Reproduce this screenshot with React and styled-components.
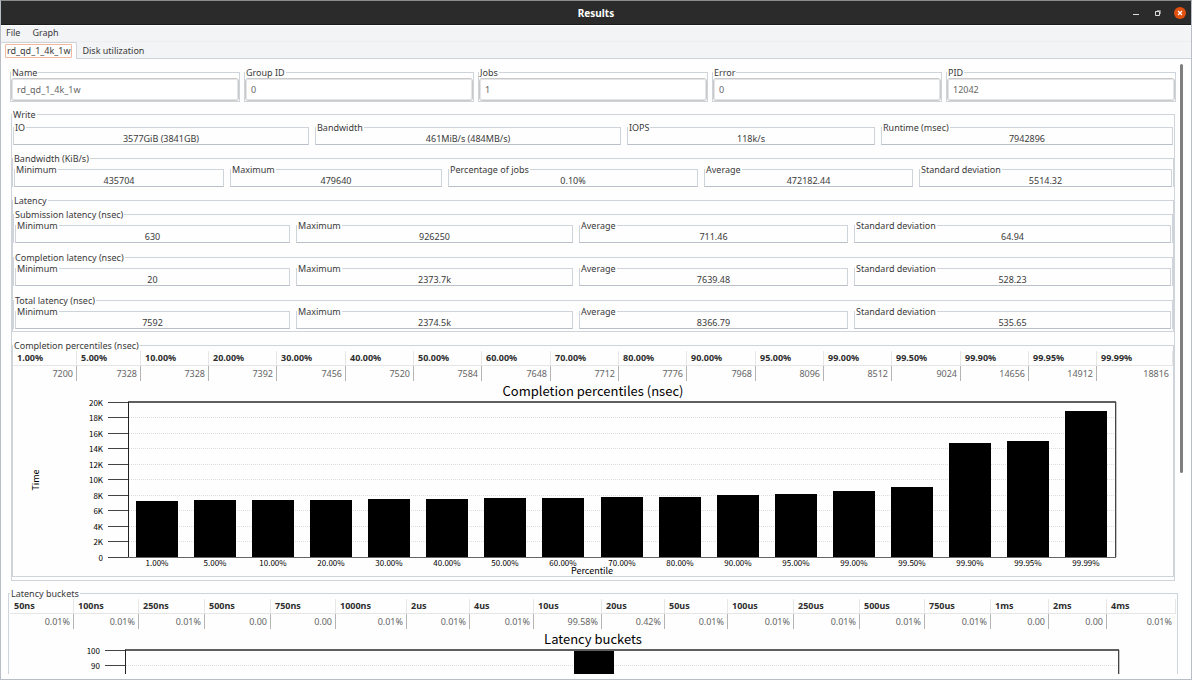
import React from "react";
import styled, { createGlobalStyle, css } from "styled-components";

const uiFont = '"Noto Sans", "Open Sans", sans-serif';
const chartFont = '"Noto Sans CJK JP", "Noto Sans", sans-serif';
const line = "#cfd4da";
const ink = "#3a3a3a";

const GlobalStyle = createGlobalStyle`
  * { box-sizing: border-box; }
  body { margin: 0; background: #fff; color: ${ink}; font: 9px/11px ${uiFont}; }
  button, input { font: inherit; color: inherit; }
`;

const Window = styled.div`
  display: flex;
  flex-direction: column;
  height: 100vh;
  border: 1px solid #b9bec6;
  border-top-color: #8b8d8b;
  background: #fefefe;
`;

const TitleBar = styled.header`
  display: grid;
  grid-template-columns: 1fr auto 1fr;
  align-items: center;
  flex: none;
  height: 24px;
  background: #2b2b2b;
  border-bottom: 1px solid #1b1b1b;
  color: #fff;
`;

const Title = styled.h1`
  grid-column: 2;
  margin: 0;
  font-size: 10px;
  line-height: 12px;
`;

const WindowControls = styled.div`
  display: flex;
  justify-content: flex-end;
  gap: 10px;
  padding-right: 5px;
`;

const ControlButton = styled.button`
  display: block;
  width: 12px;
  height: 12px;
  padding: 0;
  border: 0;
  background: none;
  svg { display: block; }
`;

const MenuBar = styled.nav`
  display: flex;
  align-items: flex-start;
  flex: none;
  gap: 12px;
  height: 17px;
  padding: 1px 5px 0;
  background: #f3f4f6;
  border-top: 1px solid #fff;
  border-bottom: 1px solid #eceef0;
`;

const MenuButton = styled.button`
  padding: 0;
  border: 0;
  background: none;
`;

const TabBar = styled.div`
  display: flex;
  flex: none;
  height: 17px;
  background: #f3f4f6;
  box-shadow: inset 0 -1px ${line};
`;

const Tab = styled.button`
  padding: 1px 3px;
  border: 0;
  background: none;
  ${(p) =>
    p.$active &&
    css`
      padding: 1px 4px;
      background: #fefefe;
      border: 1px solid ${line};
      border-width: 1px 1px 0 0;
      border-radius: 2px 2px 0 0;
    `}
`;

const TabLabel = styled.span`
  display: block;
  padding: 0 1px;
  border: 1px solid ${(p) => (p.$focused ? "#f3b8a2" : "transparent")};
  border-radius: 1px;
  line-height: 12px;
  white-space: nowrap;
`;

const Body = styled.div`
  display: flex;
  flex: 1;
  min-height: 0;
  padding-bottom: 5px;
`;

const Scroller = styled.main`
  flex: 1;
  min-width: 0;
  overflow-x: hidden;
  overflow-y: auto;
  scrollbar-width: none;
  padding: 8px 0 0 7px;
`;

const Track = styled.div`
  flex: none;
  width: 13px;
  padding: 5px 0 0 2px;
`;

const Thumb = styled.div`
  width: 3px;
  height: 67%;
  border-radius: 2px;
  background: #7f7f7f;
`;

const Page = styled.div`
  display: flex;
  flex-direction: column;
  gap: 7px;
`;

const Frame = styled.fieldset`
  min-width: 0;
  margin: 0;
  padding: 0;
  border: 1px solid ${line};
`;

const Legend = styled.legend`
  padding: 0 1px;
  line-height: 11px;
  white-space: nowrap;
`;

const FieldRow = styled.div`
  display: grid;
  grid-template-columns: repeat(5, 1fr);
  gap: 4px;
  padding: 0 2px;
`;

const TextBox = styled.input`
  display: block;
  width: 100%;
  height: 23px;
  padding: 0 5px;
  border: 1px solid #cbc9c7;
  border-radius: 3px;
  outline: 1px solid #e3e5e8;
  outline-offset: -2px;
  background: #fff;
  color: #666;
`;

const ResultFrame = styled(Frame)`
  margin: 0 3px;
  padding: 2px 0 3px;
`;

const ResultStack = styled.div`
  display: flex;
  flex-direction: column;
  gap: 8px;
`;

const LatencyFrame = styled(Frame)`
  padding: 3px 0 2px;
`;

const LatencyStack = styled.div`
  display: flex;
  flex-direction: column;
  gap: 9px;
`;

const GroupFrame = styled(Frame)`
  border-bottom: 0;
`;

const StatRow = styled.div`
  display: grid;
  grid-template-columns: ${(p) => p.$columns};
  gap: 6px;
  padding: 0 1px;
`;

const StatFrame = styled(Frame)`
  border-bottom-color: #b9c0c9;
`;

const StatValue = styled.output`
  display: block;
  line-height: 11px;
  text-align: center;
`;

const BucketFrame = styled(Frame)`
  padding: 0 1px 2px;
`;

const DataTable = styled.table`
  width: 100%;
  table-layout: fixed;
  border-spacing: 0;
`;

const Col = styled.col`
  width: ${(p) => p.$width}px;
`;

const HeadCell = styled.th`
  height: 15px;
  padding: 0 4px 1px;
  border-right: 1px solid #e6e6e6;
  border-bottom: 1px solid #e6e6e6;
  text-align: left;
  line-height: 11px;
  color: #2e2e2e;
  white-space: nowrap;
`;

const DataCell = styled.td`
  height: 15px;
  padding: 0 3px;
  border-right: 1px solid #b5b5b5;
  text-align: right;
  line-height: 11px;
  color: #666;
  &:last-child { border-right-color: transparent; }
`;

const ChartSvg = styled.svg`
  display: block;
  width: 100%;
  height: auto;
  font-family: ${chartFont};
  fill: #000;
`;

function Field({ id, label, value }) {
  return (
    <Frame>
      <Legend><label htmlFor={id}>{label}</label></Legend>
      <TextBox id={id} readOnly value={value} />
    </Frame>
  );
}

function Stats({ columns, items }) {
  return (
    <StatRow $columns={columns}>
      {items.map(([label, value]) => (
        <StatFrame key={label}>
          <Legend>{label}</Legend>
          <StatValue>{value}</StatValue>
        </StatFrame>
      ))}
    </StatRow>
  );
}

function Table({ heads, cells, widths }) {
  return (
    <DataTable>
      <colgroup>{widths.map((w, i) => <Col key={i} $width={w} />)}</colgroup>
      <thead><tr>{heads.map((h) => <HeadCell key={h} scope="col">{h}</HeadCell>)}</tr></thead>
      <tbody><tr>{cells.map((c, i) => <DataCell key={i}>{c}</DataCell>)}</tr></tbody>
    </DataTable>
  );
}

function BarChart({ title, width, labels, values, max, ticks, format, xTitle, yTitle }) {
  const left = 115;
  const right = width - 58;
  const top = 21;
  const bottom = 176;
  const step = (right - left) / values.length;
  const barWidth = Math.round(step * 0.725);
  const middle = Math.round(width / 2);
  return (
    <ChartSvg viewBox={`0 0 ${width} 195`} role="img" aria-label={title}>
      <text x={middle} y="15" fontSize="13" textAnchor="middle">{title}</text>
      {ticks.map((t) => {
        const y = Math.floor(bottom - (t / max) * (bottom - top)) + 0.5;
        return (
          <g key={t}>
            {t > 0 && t < max && (
              <path d={`M${left + 1} ${y}H${right}`} stroke="#dedede" strokeDasharray="1 1" />
            )}
            <path d={`M${left - 20} ${y}H${left}`} stroke="#444" />
            <text x={left - 25} y={y + 3} fontSize="8" textAnchor="end">{format(t)}</text>
          </g>
        );
      })}
      <path d={`M${left} ${top}H${right + 1}`} stroke="#5f5f5f" strokeWidth="2" />
      <path d={`M${right + 0.5} ${top}V${bottom + 1}`} stroke="#444" />
      <path d={`M${right + 1.5} ${top}V${bottom}`} stroke="#c4c4c4" />
      <path d={`M${left + 0.5} ${top}V${bottom + 1}`} stroke="#222" />
      <path d={`M${left} ${bottom + 0.5}H${right + 1}`} stroke="#666" />
      {values.map((v, i) => {
        const x = Math.round(left + step * i + (step - barWidth) / 2);
        const h = Math.round((v / max) * (bottom - top));
        return (
          <g key={labels[i]}>
            <rect x={x} y={bottom - h} width={barWidth} height={h} />
            <text x={x + barWidth / 2} y={bottom + 9} fontSize="8" textAnchor="middle">{labels[i]}</text>
          </g>
        );
      })}
      <text x={middle - 1} y="193" fontSize="9" textAnchor="middle">{xTitle}</text>
      <text transform="translate(26 99) rotate(-90)" fontSize="9" textAnchor="middle">{yTitle}</text>
    </ChartSvg>
  );
}

const fields = [
  ["name", "Name", "rd_qd_1_4k_1w"],
  ["group", "Group ID", "0"],
  ["jobs", "Jobs", "1"],
  ["error", "Error", "0"],
  ["pid", "PID", "12042"],
];

const latencies = [
  ["Submission latency (nsec)", "630", "926250", "711.46", "64.94"],
  ["Completion latency (nsec)", "20", "2373.7k", "7639.48", "528.23"],
  ["Total latency (nsec)", "7592", "2374.5k", "8366.79", "535.65"],
];

const percentiles = ["1.00%", "5.00%", "10.00%", "20.00%", "30.00%", "40.00%", "50.00%", "60.00%", "70.00%", "80.00%", "90.00%", "95.00%", "99.00%", "99.50%", "99.90%", "99.95%", "99.99%"];
const percentileValues = [7200, 7328, 7328, 7392, 7456, 7520, 7584, 7648, 7712, 7776, 7968, 8096, 8512, 9024, 14656, 14912, 18816];
const percentileWidths = [64, 64, 68, 68, 69, 68, 68, 69, 68, 68, 69, 68, 68, 69, 68, 68, 76];
const percentileTicks = [0, 2, 4, 6, 8, 10, 12, 14, 16, 18, 20].map((t) => t * 1000);

const buckets = ["50ns", "100ns", "250ns", "500ns", "750ns", "1000ns", "2us", "4us", "10us", "20us", "50us", "100us", "250us", "500us", "750us", "1ms", "2ms", "4ms"];
const bucketValues = ["0.01%", "0.01%", "0.01%", "0.00", "0.00", "0.01%", "0.01%", "0.01%", "99.58%", "0.42%", "0.01%", "0.01%", "0.01%", "0.01%", "0.01%", "0.00", "0.00", "0.01%"];
const bucketWidths = [64, 65, 66, 66, 65, 71, 63, 64, 68, 63, 63, 66, 66, 65, 66, 58, 58, 69];
const bucketTicks = [0, 10, 20, 30, 40, 50, 60, 70, 80, 90, 100];

export default function App() {
  return (
    <Window>
      <GlobalStyle />
      <TitleBar>
        <Title>Results</Title>
        <WindowControls>
          <ControlButton aria-label="Minimize">
            <svg width="12" height="12"><path d="M3 7.5H9" stroke="#ddd" /></svg>
          </ControlButton>
          <ControlButton aria-label="Restore">
            <svg width="12" height="12" fill="none">
              <path d="M5 3.5H8.5V7" stroke="#8c8c8c" />
              <path d="M3.5 4.5H7.5V8.5H3.5V4.5Z" stroke="#ddd" />
            </svg>
          </ControlButton>
          <ControlButton aria-label="Close">
            <svg width="12" height="12">
              <circle cx="6" cy="6" r="6" fill="#e2500f" />
              <path d="M4 4L8 8M8 4L4 8" stroke="#fff" strokeWidth="1.2" />
            </svg>
          </ControlButton>
        </WindowControls>
      </TitleBar>
      <MenuBar>
        <MenuButton>File</MenuButton>
        <MenuButton>Graph</MenuButton>
      </MenuBar>
      <TabBar role="tablist">
        <Tab role="tab" aria-selected="true" $active><TabLabel $focused>rd_qd_1_4k_1w</TabLabel></Tab>
        <Tab role="tab" aria-selected="false"><TabLabel>Disk utilization</TabLabel></Tab>
      </TabBar>
      <Body>
        <Scroller>
          <Page>
            <FieldRow>
              {fields.map(([id, label, value]) => <Field key={id} id={id} label={label} value={value} />)}
            </FieldRow>
            <ResultFrame>
              <Legend>Write</Legend>
              <ResultStack>
                <Stats
                  columns="296fr 306fr 248fr 292fr"
                  items={[["IO", "3577GiB (3841GB)"], ["Bandwidth", "461MiB/s (484MB/s)"], ["IOPS", "118k/s"], ["Runtime (msec)", "7942896"]]}
                />
                <GroupFrame>
                  <Legend>Bandwidth (KiB/s)</Legend>
                  <Stats
                    columns="210fr 212fr 250fr 209fr 253fr"
                    items={[["Minimum", "435704"], ["Maximum", "479640"], ["Percentage of jobs", "0.10%"], ["Average", "472182.44"], ["Standard deviation", "5514.32"]]}
                  />
                </GroupFrame>
                <LatencyFrame>
                  <Legend>Latency</Legend>
                  <LatencyStack>
                    {latencies.map(([label, min, max, avg, dev]) => (
                      <GroupFrame key={label}>
                        <Legend>{label}</Legend>
                        <Stats
                          columns="275fr 277fr 269fr 317fr"
                          items={[["Minimum", min], ["Maximum", max], ["Average", avg], ["Standard deviation", dev]]}
                        />
                      </GroupFrame>
                    ))}
                  </LatencyStack>
                </LatencyFrame>
                <Frame>
                  <Legend>Completion percentiles (nsec)</Legend>
                  <Table heads={percentiles} cells={percentileValues} widths={percentileWidths} />
                  <BarChart
                    title="Completion percentiles (nsec)"
                    width={1160}
                    labels={percentiles}
                    values={percentileValues}
                    max={20000}
                    ticks={percentileTicks}
                    format={(t) => (t ? `${t / 1000}K` : "0")}
                    xTitle="Percentile"
                    yTitle="Time"
                  />
                </Frame>
              </ResultStack>
            </ResultFrame>
            <BucketFrame>
              <Legend>Latency buckets</Legend>
              <Table heads={buckets} cells={bucketValues} widths={bucketWidths} />
              <BarChart
                title="Latency buckets"
                width={1166}
                labels={buckets}
                values={bucketValues.map(parseFloat)}
                max={100}
                ticks={bucketTicks}
                format={String}
              />
            </BucketFrame>
          </Page>
        </Scroller>
        <Track><Thumb /></Track>
      </Body>
    </Window>
  );
}
